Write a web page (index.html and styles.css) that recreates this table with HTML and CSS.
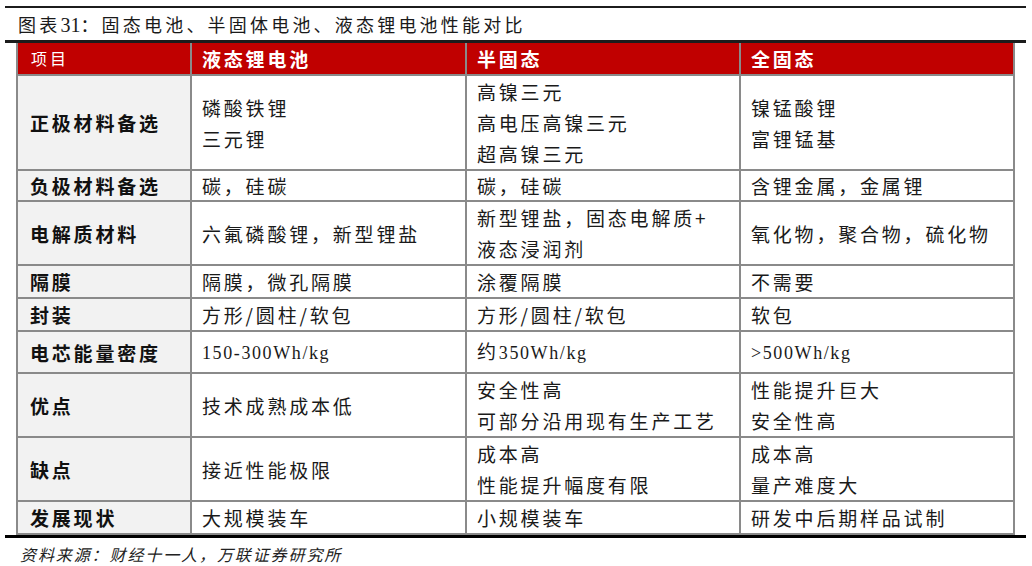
FILE: index.html
```html
<!DOCTYPE html>
<html lang="zh-CN">
<head>
<meta charset="utf-8">
<title>固态电池、半固体电池、液态锂电池性能对比</title>
<link rel="stylesheet" href="styles.css">
</head>
<body>
<div class="page">
  <div class="rule rule-top"></div>
  <div class="title">图表<span class="lat">31</span>：固态电池、半固体电池、液态锂电池性能对比</div>
  <div class="rule rule-mid"></div>
  <table class="cmp">
    <colgroup>
      <col class="c1"><col class="c2"><col class="c3"><col class="c4">
    </colgroup>
    <thead>
      <tr>
        <th class="th-item">项目</th>
        <th>液态锂电池</th>
        <th>半固态</th>
        <th>全固态</th>
      </tr>
    </thead>
    <tbody>
      <tr>
        <td class="key">正极材料备选</td>
        <td>磷酸铁锂<br>三元锂</td>
        <td>高镍三元<br>高电压高镍三元<br>超高镍三元</td>
        <td>镍锰酸锂<br>富锂锰基</td>
      </tr>
      <tr class="row-short">
        <td class="key">负极材料备选</td>
        <td>碳，硅碳</td>
        <td>碳，硅碳</td>
        <td>含锂金属，金属锂</td>
      </tr>
      <tr>
        <td class="key">电解质材料</td>
        <td>六氟磷酸锂，新型锂盐</td>
        <td>新型锂盐，固态电解质+<br>液态浸润剂</td>
        <td>氧化物，聚合物，硫化物</td>
      </tr>
      <tr>
        <td class="key">隔膜</td>
        <td>隔膜，微孔隔膜</td>
        <td>涂覆隔膜</td>
        <td>不需要</td>
      </tr>
      <tr>
        <td class="key">封装</td>
        <td>方形/圆柱/软包</td>
        <td>方形/圆柱/软包</td>
        <td>软包</td>
      </tr>
      <tr class="row-density">
        <td class="key">电芯能量密度</td>
        <td><span class="lat">150-300Wh/kg</span></td>
        <td>约<span class="lat">350Wh/kg</span></td>
        <td><span class="lat">&gt;500Wh/kg</span></td>
      </tr>
      <tr>
        <td class="key">优点</td>
        <td>技术成熟成本低</td>
        <td>安全性高<br>可部分沿用现有生产工艺</td>
        <td>性能提升巨大<br>安全性高</td>
      </tr>
      <tr>
        <td class="key">缺点</td>
        <td>接近性能极限</td>
        <td>成本高<br>性能提升幅度有限</td>
        <td>成本高<br>量产难度大</td>
      </tr>
      <tr>
        <td class="key">发展现状</td>
        <td>大规模装车</td>
        <td>小规模装车</td>
        <td>研发中后期样品试制</td>
      </tr>
    </tbody>
  </table>
  <div class="rule rule-bottom"></div>
  <div class="source">资料来源：财经十一人，万联证券研究所</div>
</div>
</body>
</html>
```

FILE: styles.css
```css
html, body {
  margin: 0;
  padding: 0;
  background: #ffffff;
}

body {
  font-family: "Noto Sans CJK SC", "Liberation Serif", serif;
  color: #1a1a1a;
}

.page {
  width: 1021px;
  padding: 6px 0 0 5px;
}

.rule {
  background: #1c1c1c;
  width: 1021px;
}

.rule-top {
  height: 2px;
}

.rule-mid {
  height: 3px;
}

.rule-bottom {
  height: 3px;
  background: #000;
}

.title {
  height: 32px;
  line-height: 32px;
  padding-left: 13px;
  font-size: 18px;
  letter-spacing: 3.2px;
  color: #1a1a1a;
}

.lat {
  font-family: "Liberation Serif", serif;
  letter-spacing: 1.6px;
}

.title .lat {
  font-size: 20px;
  letter-spacing: 0;
}

.cmp {
  margin-left: 11px;
  width: 997px;
  border-collapse: collapse;
  table-layout: fixed;
}

.c1 { width: 174px; }
.c2 { width: 275px; }
.c3 { width: 274px; }
.c4 { width: 274px; }

.cmp th,
.cmp td {
  border: 2px solid #8a8a8a;
  padding: 0 0 0 10px;
  line-height: 31px;
  font-size: 19px;
  letter-spacing: 2.8px;
  text-align: left;
  vertical-align: middle;
  white-space: nowrap;
}

.cmp td .lat {
  font-size: 18px;
  letter-spacing: 1.6px;
}

.cmp thead th {
  border-top: none;
  background: #c00000;
  color: #ffffff;
  font-weight: 700;
  height: 31px;
}

.cmp thead th.th-item {
  font-weight: 400;
  font-size: 16px;
  padding-left: 13px;
  letter-spacing: 3px;
}

.cmp td.key {
  background: #f2f2f2;
  font-weight: 700;
  padding-left: 12px;
  color: #111;
}

.cmp td {
  color: #1a1a1a;
}

.row-short td {
  height: 29px;
  line-height: 29px;
}

.row-density td {
  height: 40px;
}

.source {
  padding: 4px 0 0 15px;
  font-size: 16px;
  letter-spacing: 1.9px;
  font-style: italic;
  color: #222;
}
```
